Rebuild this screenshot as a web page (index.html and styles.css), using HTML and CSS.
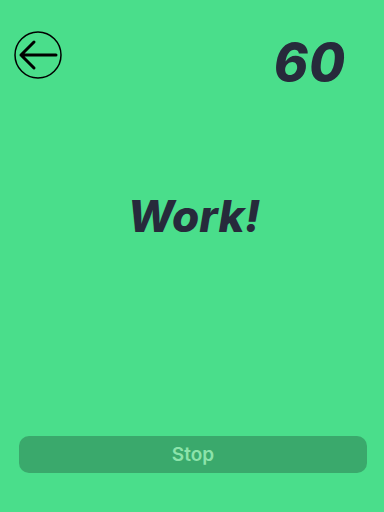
FILE: index.html
```html
<!DOCTYPE html>
<html lang="en">
<head>
    <meta charset="UTF-8">
    <meta name="viewport" content="width=device-width, initial-scale=1.0">
    <title>Workout Timer</title>
    <link rel="stylesheet" href="styles.css">
</head>
<body>
    <div class="screen">
        <div class="top-bar">
            <button class="back-btn" aria-label="Back">
                <svg width="48" height="48" viewBox="0 0 48 48">
                    <circle cx="24" cy="24" r="23" fill="none" stroke="#000" stroke-width="1.5"/>
                    <path d="M42 24H7M20 11L7 24L20 37" fill="none" stroke="#000" stroke-width="3" stroke-linecap="round" stroke-linejoin="round"/>
                </svg>
            </button>
            <div class="counter">60</div>
        </div>
        <div class="phase">Work!</div>
        <button class="stop-btn">Stop</button>
    </div>
</body>
</html>
```

FILE: styles.css
```css
body {
    margin: 0;
    padding: 0;
    background-color: #4ade8b;
    font-family: Inter, Roboto, sans-serif;
}
.screen {
    height: 512px;
    display: flex;
    flex-direction: column;
    box-sizing: border-box;
    padding: 31px 17px 39px 19px;
}
.top-bar {
    display: flex;
    justify-content: space-between;
    align-items: flex-start;
}
.back-btn {
    background: none;
    border: none;
    padding: 0;
    margin-left: -5px;
    width: 48px;
    height: 48px;
    cursor: pointer;
}
.back-btn svg {
    display: block;
}
.counter {
    font-size: 52px;
    font-weight: 800;
    font-style: italic;
    color: #272a3b;
    line-height: 1;
    margin-top: 6px;
    margin-right: 21px;
    letter-spacing: 1px;
}
.phase {
    flex: 1;
    text-align: center;
    font-size: 44px;
    font-weight: 800;
    font-style: italic;
    color: #272a3b;
    padding-top: 100px;
    margin-left: 2px;
}
.stop-btn {
    height: 37px;
    width: 100%;
    border: none;
    border-radius: 10px;
    background-color: #3aa96c;
    color: #8ce3aa;
    font-family: Inter, Roboto, sans-serif;
    font-size: 19px;
    font-weight: 600;
    cursor: pointer;
}
```
